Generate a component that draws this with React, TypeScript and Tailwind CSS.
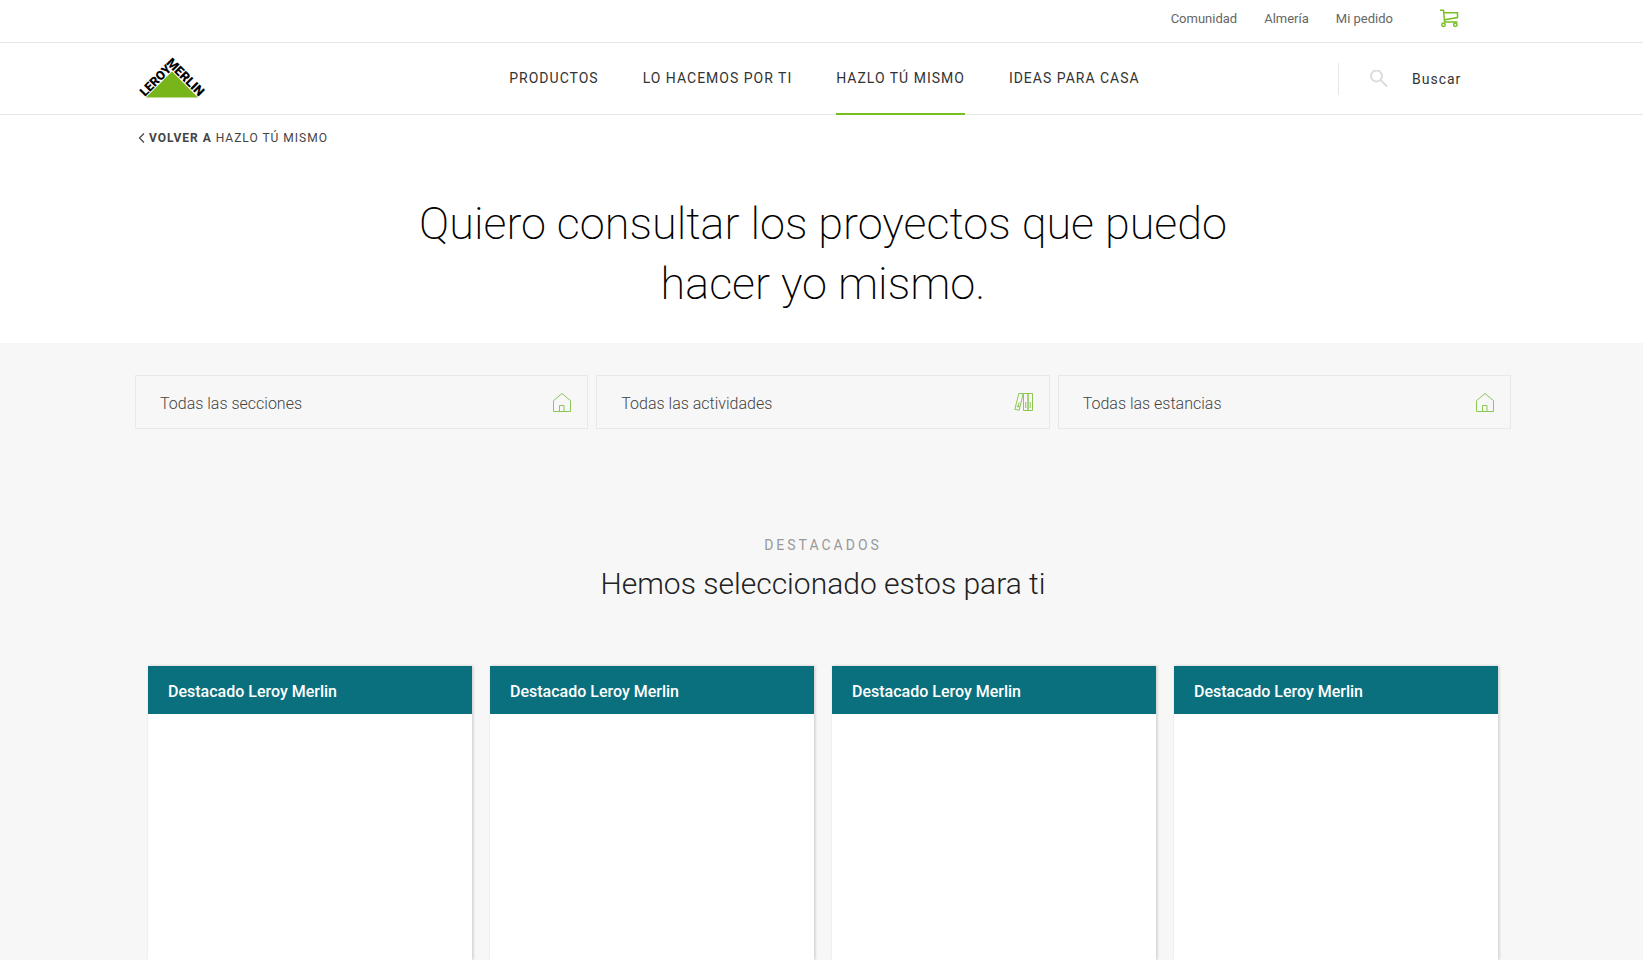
const navItems = [
  { label: 'PRODUCTOS', active: false },
  { label: 'LO HACEMOS POR TI', active: false },
  { label: 'HAZLO TÚ MISMO', active: true },
  { label: 'IDEAS PARA CASA', active: false },
];

const filters = [
  { id: 'secciones', label: 'Todas las secciones', icon: 'house' },
  { id: 'actividades', label: 'Todas las actividades', icon: 'books' },
  { id: 'estancias', label: 'Todas las estancias', icon: 'house' },
];

const cards = [1, 2, 3, 4];

function Logo() {
  return (
    <svg width="68" height="44" viewBox="0 0 68 44" className="overflow-visible" role="img" aria-label="Leroy Merlin">
      <path d="M34 14.500 60 40.500H8z" fill="#78b51b" />
      <g fill="#000" fontFamily="Roboto, sans-serif" fontWeight="900" fontSize="12.500">
        <text transform="translate(7 40) rotate(-45)">LEROY</text>
        <text fontSize="13" transform="translate(27.500 6.500) rotate(45)">MERLIN</text>
      </g>
    </svg>
  );
}

function CartIcon() {
  return (
    <svg width="20" height="20" viewBox="0 0 20 20" fill="none" stroke="#78be20" strokeWidth="1.5">
      <path d="M0 1.300h3.500l1.100 11.700M4 3.800h13.500v4.700L4.700 10.800M4.500 13.100h13" />
      <circle cx="3.500" cy="15.800" r="1.700" />
      <circle cx="15.300" cy="15.800" r="1.700" />
    </svg>
  );
}

function SearchIcon() {
  return (
    <svg width="18" height="18" viewBox="0 0 18 18" fill="none" stroke="#dcdcdc" strokeWidth="2">
      <circle cx="6.500" cy="6" r="5.500" />
      <path d="m10.500 10 6.500 6.500" />
    </svg>
  );
}

function HouseIcon() {
  return (
    <svg width="20" height="20" viewBox="0 0 20 20" fill="none" stroke="#8cc653">
      <path d="M1.500 19.500V8.700L10 1.500l8.500 7.200v10.800zM7.500 19.500v-6h4.500v6" />
    </svg>
  );
}

function BooksIcon() {
  return (
    <svg width="20" height="20" viewBox="0 0 20 20" fill="none" stroke="#8cc653">
      <path d="M9.500 1.500h4.500v17H9.500zM14 1.500h4.500v17H14zM4.800 1.500h4.400L5.200 18.200.8 17.400z" />
      <path d="M11.700 10v6M16.200 10v6M5.200 10.500l-1.300 5M2.600 14l3.400.8" />
    </svg>
  );
}

export default function App() {
  return (
    <div className="flex min-h-screen flex-col bg-white font-[Roboto,sans-serif] text-[#333]">
      <div className="flex h-[43px] items-center justify-end border-b border-[#e6e6e6] pr-[183px] pb-[5px]">
        <nav aria-label="Cuenta" className="flex items-center gap-[27px] text-[13px] text-[#666]">
          <a href="#comunidad">Comunidad</a>
          <a href="#tienda">Almería</a>
          <a href="#pedido">Mi pedido</a>
        </nav>
        <a href="#carrito" aria-label="Carrito" className="ml-[47px]">
          <CartIcon />
        </a>
      </div>

      <header className="flex h-[72px] items-center justify-between border-b border-[#e6e6e6] pr-[174px] pl-[138px]">
        <a href="#inicio">
          <Logo />
        </a>
        <nav aria-label="Principal" className="flex gap-[44px] self-stretch pl-[105px] text-[14px] tracking-[1px]">
          {navItems.map((item) => (
            <a
              key={item.label}
              href="#menu"
              className={
                item.active
                  ? '-mb-px flex items-center border-b-2 border-[#78be20] pt-px'
                  : '-mb-px flex items-center border-b-2 border-transparent pt-px'
              }
            >
              {item.label}
            </a>
          ))}
        </nav>
        <form role="search" className="flex h-8 items-center border-l border-[#e6e6e6] pl-[31px]">
          <SearchIcon />
          <input
            id="buscar"
            type="text"
            aria-label="Buscar"
            placeholder="Buscar"
            className="ml-6 h-6 w-[57px] pt-px text-[14px] leading-5 tracking-[1px] outline-none placeholder:text-[#333]"
          />
        </form>
      </header>

      <section className="flex h-[228px] flex-col">
        <a
          href="#volver"
          className="flex items-center gap-1 self-start pt-[14px] pl-[138px] text-[12px] leading-[18px] tracking-[1px] text-[#444]"
        >
          <svg width="7" height="10" viewBox="0 0 7 10" fill="none" stroke="#444" strokeWidth="1.2">
            <path d="M6 .5 1.500 5 6 9.500" />
          </svg>
          <span>
            <b>VOLVER A</b> HAZLO TÚ MISMO
          </span>
        </a>
        <h1 className="mx-auto mt-[47px] max-w-[900px] pl-[3px] text-center text-[45px] leading-[60px] font-extralight text-black">
          Quiero consultar los proyectos que puedo hacer yo mismo.
        </h1>
      </section>

      <main className="flex flex-1 flex-col bg-[#f7f7f7]">
        <div className="grid grid-cols-3 gap-2 pt-8 pr-[132px] pl-[135px]">
          {filters.map((filter) => (
            <div key={filter.id} className="relative">
              <select
                id={filter.id}
                aria-label={filter.label}
                className="h-[54px] w-full appearance-none border border-[#e8e8e8] bg-transparent pt-[3px] pl-6 text-[16px] font-light text-[#444]"
              >
                <option>{filter.label}</option>
              </select>
              <span className="pointer-events-none absolute top-[17px] right-4">
                {filter.icon === 'house' ? <HouseIcon /> : <BooksIcon />}
              </span>
            </div>
          ))}
        </div>

        <div className="mt-[106px] pl-[3px] text-center">
          <p className="text-[14px] leading-5 tracking-[3px] text-[#999]">DESTACADOS</p>
          <h2 className="mt-[9px] text-[30px] leading-10 font-light text-[#222]">
            Hemos seleccionado estos para ti
          </h2>
        </div>

        <div className="mt-[62px] grid flex-1 grid-cols-4 gap-[18px] pr-[145px] pl-[148px]">
          {cards.map((card) => (
            <article key={card} className="bg-white shadow-[1px_0_3px_rgba(0,0,0,0.2)]">
              <h3 className="flex h-12 items-center bg-[#0a707e] px-5 pt-1 text-[16px] font-medium text-white">
                Destacado Leroy Merlin
              </h3>
            </article>
          ))}
        </div>
      </main>
    </div>
  );
}
